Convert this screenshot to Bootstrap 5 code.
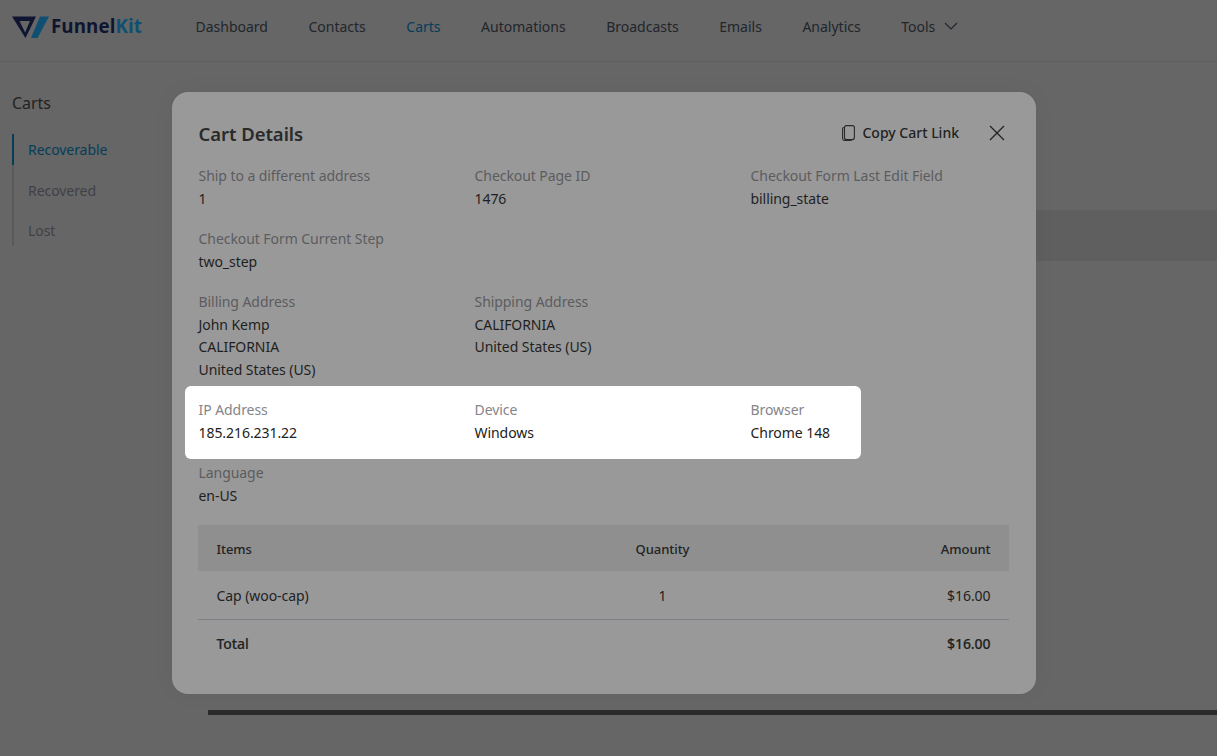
<!DOCTYPE html>
<html lang="en">
<head>
<meta charset="utf-8">
<title>Cart Details</title>
<link rel="stylesheet" href="https://cdn.jsdelivr.net/npm/bootstrap@5.3.0/dist/css/bootstrap.min.css">
<style>
html,body{height:100%}
body{background:#666;font-family:"Noto Sans","Open Sans",sans-serif;font-size:14px;color:#222;letter-spacing:-.06px;overflow:hidden;position:relative}
.fk-top{height:62px;border-bottom:1px solid #5e5e5e;padding-left:12px}
.fk-logo{width:37px;height:24px;margin-top:1px;flex:none}
.fk-brand{font-family:"Open Sans",sans-serif;font-weight:700;font-size:18.7px;letter-spacing:.1px;color:#0f1530;margin-left:2px;line-height:1}
.fk-brand span{color:#0e4f73}
.fk-nav{margin-left:53.5px;gap:40.5px;letter-spacing:0}
.fk-nav a{color:#22252b;text-decoration:none}
.fk-nav a.on{color:#053d58}
.fk-side{width:172px;padding:30px 0 0 12px}
.fk-side h2{font-size:16px;font-weight:400;color:#222;margin:0 0 20px;line-height:22px}
.fk-tabs{border-left:2px solid #585a60;width:120px;height:112px}
.fk-tabs a{display:block;padding:1px 0 0 14px;height:40px;line-height:30px;color:#3f4146;text-decoration:none}
.fk-tabs a.on{color:#053d58;position:relative;height:31px}
.fk-tabs a.on::before{content:"";position:absolute;left:-2px;top:0;bottom:0;width:2px;background:#053d58}
.fk-tabs a.second{padding-top:11px;height:50px}
.fk-band{position:absolute;left:1036px;right:0;top:210px;height:51px;background:#5f5f60}
.fk-rule{position:absolute;left:208px;right:0;top:710px;height:5px;background:#2b2b2b}
.fk-modal{position:absolute;left:172px;top:92px;width:864px;height:602px;background:#999;border-radius:16px;padding:26px;box-shadow:0 0 24px rgba(0,0,0,.04)}
.fk-head{height:32px;margin-bottom:15px}
.fk-title{font-size:18.5px;font-weight:600;color:#2a2a2a;margin:0;line-height:32px;padding-left:.5px}
.fk-copy{font-weight:500;color:#222;background:none;border:0;padding:0;font-size:14px;gap:7px;margin-right:51px;margin-top:-3px}
.fk-close{background:none;border:0;padding:0;position:absolute;right:30px;top:31.5px;width:18px;height:18px;line-height:0}
.fk-grid{display:grid;grid-template-columns:276px 276px 1fr;row-gap:18px;margin-bottom:18px;padding-left:.5px}
.fk-f{line-height:22.5px}
.fk-f div:first-child{color:#5c5c5f}
.fk-f div:last-child{color:#1f1f1f}
.fk-hi{background:#fff;border-radius:6px;width:675.5px;margin:-13px 0 -15px -13.5px;padding:13px 13.5px 14.5px;display:grid;grid-template-columns:276px 276px 1fr;position:relative}
.fk-hi .fk-f div:first-child{color:#85858a}
.fk-hi .fk-f div:last-child{color:#222}
.fk-lang{margin-top:.5px}
.fk-table{width:811px;margin-top:1px;border-collapse:collapse}
.fk-table th,.fk-table td{padding:0 18.5px;color:#222;font-size:14px}
.fk-table thead th{background:#8f8f8f;height:46px;font-size:13px;font-weight:500;padding-top:3px}
.fk-table tbody td{height:48px;border-bottom:1px solid #7e7f86;padding-top:1px}
.fk-table tfoot th{height:48px;font-weight:500;-webkit-text-stroke:.15px #222}
</style>
</head>
<body>
<header class="fk-top d-flex align-items-center">
  <div class="d-flex align-items-center" style="padding-bottom:9px;height:52px">
    <svg class="fk-logo" viewBox="0 0 37 24"><path fill-rule="evenodd" d="M0 1.5h24L13.5 23zM7.5 6l5.6 11.5L18 6z" fill="#0f1530"/><path d="M28 1.5h9L25.5 23H19z" fill="#0e4f73"/></svg>
    <span class="fk-brand">Funnel<span>Kit</span></span>
  </div>
  <nav class="fk-nav d-flex align-items-center" style="padding-bottom:9px;height:52px">
    <a href="#">Dashboard</a><a href="#">Contacts</a><a href="#" class="on">Carts</a><a href="#">Automations</a><a href="#">Broadcasts</a><a href="#">Emails</a><a href="#">Analytics</a>
    <a href="#" class="d-flex align-items-center" style="gap:9px">Tools <svg width="14" height="8" viewBox="0 0 14 8" fill="none" stroke="#22252b" stroke-width="1.2"><path d="M1 1l6 6 6-6"/></svg></a>
  </nav>
</header>
<aside class="fk-side">
  <h2>Carts</h2>
  <div class="fk-tabs">
    <a href="#" class="on">Recoverable</a>
    <a href="#" class="second">Recovered</a>
    <a href="#">Lost</a>
  </div>
</aside>
<div class="fk-band"></div>
<div class="fk-rule"></div>
<div class="fk-modal" role="dialog">
  <div class="fk-head d-flex justify-content-between align-items-center">
    <h5 class="fk-title">Cart Details</h5>
    <button class="fk-copy d-flex align-items-center" type="button">
      <svg width="13" height="16" viewBox="0 0 13 16" fill="none" stroke="#2a2a2a" stroke-width="1.1"><rect x="2.5" y=".6" width="9.9" height="14" rx="2"/><path d="M2.5 2.5H2A1.5 1.5 0 0 0 .6 4v9.5A1.9 1.9 0 0 0 2.5 15.4h7"/></svg>
      Copy Cart Link
    </button>
    <button class="fk-close" type="button" aria-label="Close"><svg width="18" height="18" viewBox="0 0 18 18" stroke="#222" stroke-width="1.3"><path d="M2 2l14 14M16 2L2 16"/></svg></button>
  </div>
  <div class="fk-grid">
    <div class="fk-f"><div>Ship to a different address</div><div>1</div></div>
    <div class="fk-f"><div>Checkout Page ID</div><div>1476</div></div>
    <div class="fk-f"><div>Checkout Form Last Edit Field</div><div>billing_state</div></div>
    <div class="fk-f"><div>Checkout Form Current Step</div><div>two_step</div></div>
    <div></div><div></div>
    <div class="fk-f"><div>Billing Address</div><div>John Kemp<br>CALIFORNIA<br>United States (US)</div></div>
    <div class="fk-f"><div>Shipping Address</div><div>CALIFORNIA<br>United States (US)</div></div>
    <div></div>
    <div class="fk-hi" style="grid-column:1/-1">
      <div class="fk-f"><div>IP Address</div><div>185.216.231.22</div></div>
      <div class="fk-f"><div>Device</div><div>Windows</div></div>
      <div class="fk-f"><div>Browser</div><div>Chrome 148</div></div>
    </div>
    <div class="fk-f fk-lang"><div>Language</div><div>en-US</div></div>
  </div>
  <table class="fk-table">
    <thead><tr><th style="width:270px">Items</th><th class="text-center" style="width:389px">Quantity</th><th class="text-end">Amount</th></tr></thead>
    <tbody><tr><td>Cap (woo-cap)</td><td class="text-center">1</td><td class="text-end">$16.00</td></tr></tbody>
    <tfoot><tr><th>Total</th><th></th><th class="text-end">$16.00</th></tr></tfoot>
  </table>
</div>
<script src="https://cdn.jsdelivr.net/npm/bootstrap@5.3.0/dist/js/bootstrap.bundle.min.js"></script>
</body>
</html>
